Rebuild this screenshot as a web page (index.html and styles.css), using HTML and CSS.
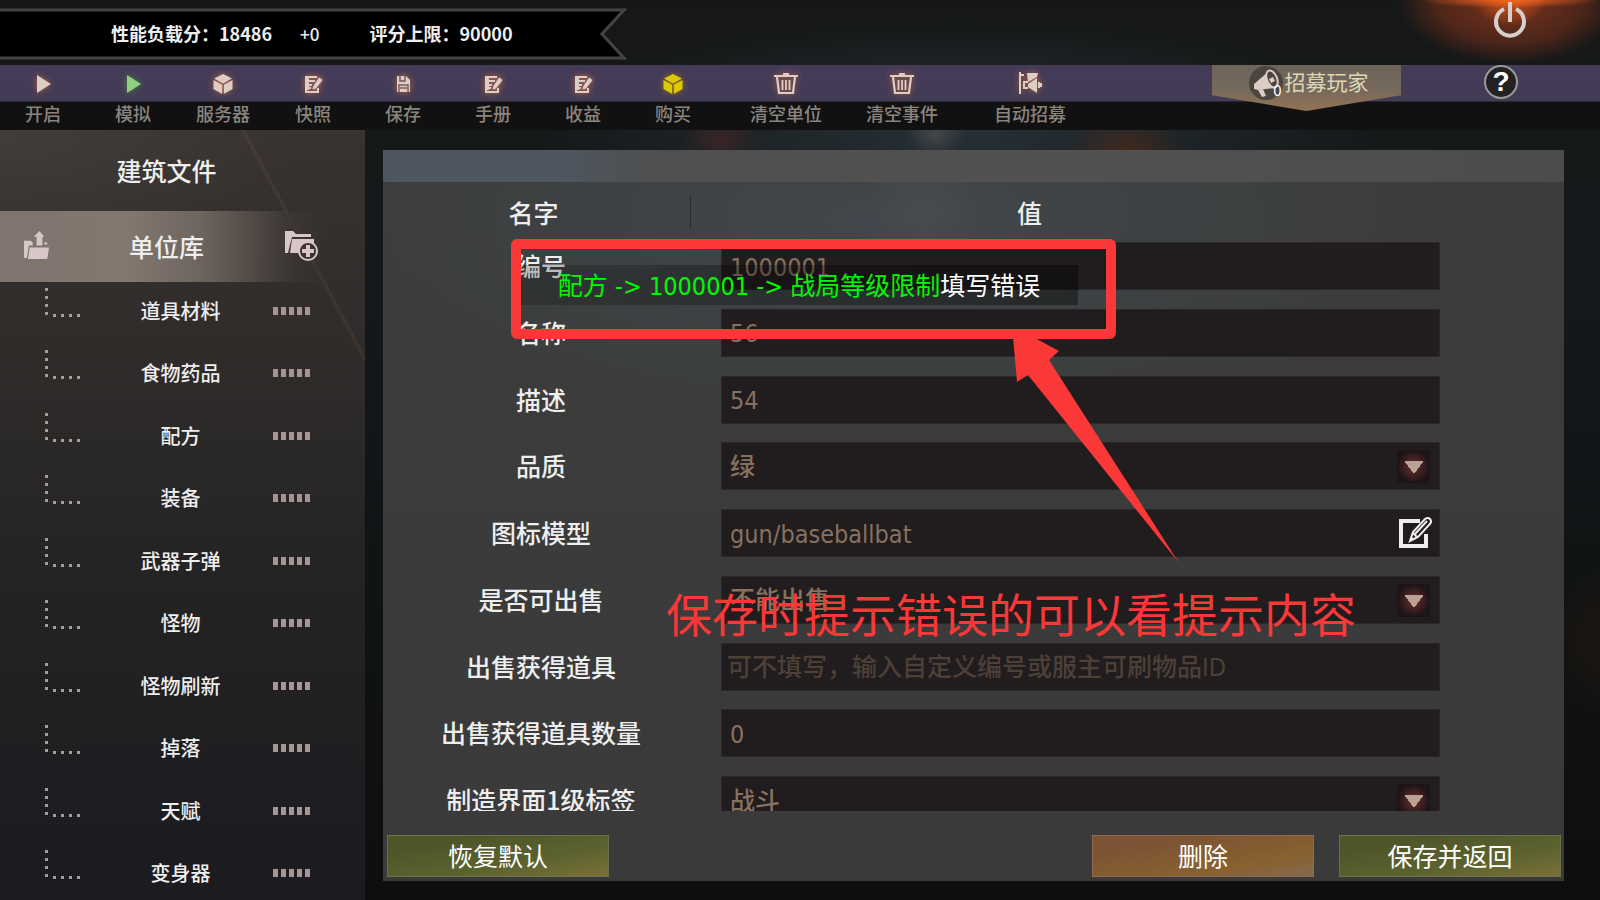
FILE: index.html
```html
<!DOCTYPE html>
<html lang="zh-CN">

<head>
    <meta charset="UTF-8">
    <meta name="viewport" content="width=device-width, initial-scale=1.0">
    <title>单位库</title>
    <link rel="stylesheet" href="styles.css">
</head>

<body>
    <!-- Shared icons -->
    <svg class="sprite" aria-hidden="true">
        <symbol id="i-play" viewBox="0 0 24 24"><path d="M6 3l14 9-14 9z" fill="currentColor"/></symbol>
        <symbol id="i-cube" viewBox="0 0 24 24"><path d="M12 2l9 4.500-9 5-9-5zM2.500 8l8.700 4.800V22l-8.700-5zM21.500 8l-8.700 4.800V22l8.700-5z" fill="currentColor"/></symbol>
        <symbol id="i-note" viewBox="0 0 24 24">
            <path d="M5 4h12v16H5z" fill="#8a5450"/>
            <path d="M16 5H5v2h2v2H5v2h2v2H5v2h2v2H5v3h12v-4" fill="none" stroke="currentColor" stroke-width="2"/>
            <path d="M8 9h6M8 13h3M8 16h2" stroke="currentColor" stroke-width="2"/>
            <path d="M18 5l4 3-7 9-4 1 1-4z" fill="currentColor" stroke="#6c4a52" stroke-width="0.600"/>
        </symbol>
        <symbol id="i-save" viewBox="0 0 24 24">
            <path d="M6 4h9l4 4v12H6z" fill="currentColor"/>
            <path d="M9 4v5h5V4M8 20v-7h9v7M9 16h7" fill="none" stroke="#7b5a5c" stroke-width="1.500"/>
        </symbol>
        <symbol id="i-trash" viewBox="0 0 24 24">
            <path d="M0 4h24M9 2h6M3 5l2 16h14l2-16" fill="none" stroke="currentColor" stroke-width="2.200"/>
            <path d="M8.500 8v10M12 8v10M15.500 8v10" stroke="currentColor" stroke-width="1.800"/>
        </symbol>
        <symbol id="i-horn" viewBox="0 0 24 24">
            <path d="M1 0h2v22H1zM3 2h3v2H3zM9 1h11l-1 4-9 5zM5 9h5v2H7v4h3v2H5zM10 12l9-6v15l-9-6zM20 10h2v6h-2zM22 11h2v4h-2z" fill="currentColor"/>
        </symbol>
    </svg>

    <header>
        <div class="score">
            <svg class="score-bg" viewBox="0 0 628 52" preserveAspectRatio="none">
                <path d="M-4 2H624L602 26l22 24H-4z" fill="#000" stroke="#444" stroke-width="3"/>
            </svg>
            <span class="score-now">性能负载分：18486</span>
            <span class="score-add">+0</span>
            <span>评分上限：90000</span>
        </div>
        <button class="power" aria-label="退出">
            <svg viewBox="0 0 36 40"><path d="M12 9a14 14 0 1 0 12 0" fill="none" stroke="currentColor" stroke-width="4"/><path d="M18 2v20" stroke="currentColor" stroke-width="4"/></svg>
        </button>
    </header>

    <nav class="toolbar">
        <button class="tool"><svg><use href="#i-play"/></svg>开启</button>
        <button class="tool green"><svg><use href="#i-play"/></svg>模拟</button>
        <button class="tool"><svg><use href="#i-cube"/></svg>服务器</button>
        <button class="tool"><svg><use href="#i-note"/></svg>快照</button>
        <button class="tool"><svg><use href="#i-save"/></svg>保存</button>
        <button class="tool"><svg><use href="#i-note"/></svg>手册</button>
        <button class="tool"><svg><use href="#i-note"/></svg>收益</button>
        <button class="tool yellow"><svg><use href="#i-cube"/></svg>购买</button>
        <button class="tool wide first"><svg><use href="#i-trash"/></svg>清空单位</button>
        <button class="tool wide"><svg><use href="#i-trash"/></svg>清空事件</button>
        <button class="tool wide last"><svg><use href="#i-horn"/></svg>自动招募</button>
        <button class="recruit">
            <span class="recruit-icon">
                <svg viewBox="0 0 34 34">
                    <circle cx="17" cy="17" r="17" fill="#4c443e"/>
                    <path d="M5 18l14-12 7 16-17 2-4-1z" fill="#dccdc5"/>
                    <ellipse cx="23" cy="13" rx="5" ry="9" transform="rotate(-22 23 13)" fill="#4c443e" stroke="#dccdc5" stroke-width="2"/>
                    <path d="M20 13l4-2 2 4-4 2z" fill="#dccdc5"/>
                    <path d="M9 24l5-1 3 7-4 1z" fill="#dccdc5"/>
                </svg>
                <span class="count">0</span>
            </span>
            招募玩家
        </button>
        <button class="help" aria-label="帮助">?</button>
    </nav>

    <main>
        <aside>
            <h2>建筑文件</h2>
            <div class="group">
                <button aria-label="导出">
                    <svg viewBox="0 0 26 30"><path d="M0 10h7l2 2v3H5L3 28H0zM6 17h20l-2 12H4zM13 15V6h-3l6-6 5 6h-2v9zM21 12h3v2h-3z" fill="currentColor"/></svg>
                </button>
                <span>单位库</span>
                <button aria-label="新建">
                    <svg viewBox="0 0 34 32">
                        <path d="M0 1h8l3 3h15v3H7L3 23H0zM7 9h22v6L17 23H5z" fill="currentColor"/>
                        <circle cx="23" cy="21" r="9" fill="#3a3431" stroke="currentColor" stroke-width="2"/>
                        <path d="M23 15v12M17 21h12" stroke="currentColor" stroke-width="4"/>
                    </svg>
                </button>
            </div>
            <ul class="tree">
                <li><i class="branch"></i><a href="#">道具材料</a><i class="dots"></i></li>
                <li><i class="branch"></i><a href="#">食物药品</a><i class="dots"></i></li>
                <li><i class="branch"></i><a href="#">配方</a><i class="dots"></i></li>
                <li><i class="branch"></i><a href="#">装备</a><i class="dots"></i></li>
                <li><i class="branch"></i><a href="#">武器子弹</a><i class="dots"></i></li>
                <li><i class="branch"></i><a href="#">怪物</a><i class="dots"></i></li>
                <li><i class="branch"></i><a href="#">怪物刷新</a><i class="dots"></i></li>
                <li><i class="branch"></i><a href="#">掉落</a><i class="dots"></i></li>
                <li><i class="branch"></i><a href="#">天赋</a><i class="dots"></i></li>
                <li><i class="branch"></i><a href="#">变身器</a><i class="dots"></i></li>
            </ul>
        </aside>

        <section class="panel">
            <div class="panel-bar"></div>
            <div class="cols">
                <span class="col-name">名字</span>
                <span class="col-value">值</span>
            </div>
            <div class="scroll">
                <form class="fields" id="unit">
                    <div class="field"><label for="f1">编号</label><input id="f1" type="text" value="1000001"></div>
                    <div class="field"><label for="f2">名称</label><input id="f2" type="text" value="56"></div>
                    <div class="field"><label for="f3">描述</label><input id="f3" type="text" value="54"></div>
                    <div class="field drop"><label for="f4">品质</label><select id="f4"><option>绿</option></select></div>
                    <div class="field">
                        <label for="f5">图标模型</label><input id="f5" type="text" value="gun/baseballbat">
                        <button class="edit" type="button" aria-label="编辑">
                            <svg viewBox="0 0 34 34">
                                <path d="M22 5H3v25h25V18" fill="none" stroke="#eee" stroke-width="4"/>
                                <path d="M12 25l3-9L27 3q3-2 5 0t0 5L20 21z" fill="#211c1d" stroke="#eee" stroke-width="2"/>
                                <path d="M17 18L29 5M15 17l4 4M12 25l3-3" stroke="#eee" stroke-width="2"/>
                            </svg>
                        </button>
                    </div>
                    <div class="field drop"><label for="f6">是否可出售</label><select id="f6"><option>不能出售</option></select></div>
                    <div class="field"><label for="f7">出售获得道具</label><input id="f7" class="hint" type="text" placeholder="可不填写，输入自定义编号或服主可刷物品ID"></div>
                    <div class="field"><label for="f8">出售获得道具数量</label><input id="f8" type="text" value="0"></div>
                    <div class="field drop"><label for="f9">制造界面1级标签</label><select id="f9"><option>战斗</option></select></div>
                </form>
            </div>
            <div class="actions">
                <button class="btn">恢复默认</button>
                <button class="btn orange">删除</button>
                <button class="btn">保存并返回</button>
            </div>

            <!-- Error message and the notes drawn over the form -->
            <div class="toast"><em>配方 -&gt; 1000001 -&gt; 战局等级限制</em>填写错误</div>
            <div class="mark"></div>
            <svg class="arrow" viewBox="0 0 166 226"><path d="M0 0h20l26 14-10 9 130 203L15 38 4 45z" fill="#fb3838"/></svg>
            <p class="note">保存时提示错误的可以看提示内容</p>
        </section>
    </main>
</body>

</html>
```

FILE: styles.css
```css
* {
    box-sizing: border-box;
}

body {
    margin: 0;
    height: 100vh;
    overflow: hidden;
    display: flex;
    flex-direction: column;
    font-family: "Noto Sans CJK SC", "Noto Sans", sans-serif;
    color: #eee;
    background:
        radial-gradient(ellipse 40px 30px at 720px 138px, #3a2426, transparent),
        radial-gradient(ellipse 30px 24px at 935px 134px, #44464a, transparent),
        radial-gradient(ellipse 60px 40px at 1125px 150px, #40291f, transparent),
        radial-gradient(ellipse 420px 110px at 960px 130px, #263036, transparent),
        radial-gradient(ellipse 50px 80px at 1600px 640px, #1d1611, transparent),
        linear-gradient(#161817, #15191b 30%, #101415 60%, #0e0e0d);
}

button,
input,
select {
    font: inherit;
    color: inherit;
    border: none;
    border-radius: 0;
    background: none;
    padding: 0;
    margin: 0;
}

button {
    cursor: pointer;
}

.sprite {
    position: absolute;
    width: 0;
    height: 0;
}

/* Header */
header {
    height: 65px;
    display: flex;
    justify-content: space-between;
    background:
        radial-gradient(ellipse 90px 8px at calc(100% - 90px) 0, #f0641f, transparent),
        radial-gradient(ellipse 36px 26px at calc(100% - 90px) 0, #d8551c, transparent),
        radial-gradient(ellipse 112px 64px at calc(100% - 90px) 0, #6e2f1b 20%, #4e261a 65%, transparent);
}

.score {
    position: relative;
    width: 628px;
    height: 52px;
    margin-top: 8px;
    padding: 0 0 2px 111px;
    display: flex;
    align-items: center;
    font-size: 18px;
    font-weight: 700;
    white-space: nowrap;
}

.score-bg {
    position: absolute;
    left: 0;
    top: 0;
    width: 100%;
    height: 100%;
    z-index: -1;
}

.score-add {
    margin: 0 50px 0 28px;
    font-size: 17px;
    font-weight: 500;
}

.power {
    width: 36px;
    height: 40px;
    margin-right: 72px;
    color: #d6cfcd;
}

/* Toolbar */
.toolbar {
    height: 65px;
    display: flex;
    align-items: flex-start;
    background: linear-gradient(#443b59 0, #433c55 36px, #111 37px);
}

.tool {
    width: 90px;
    height: 65px;
    display: flex;
    flex-direction: column;
    align-items: center;
    gap: 4px;
    padding-top: 7px;
    font-size: 18px;
    font-weight: 500;
    line-height: 26px;
    color: #8b847d;
}

.tool:first-child {
    margin-left: -2px;
}

.tool svg {
    width: 24px;
    height: 24px;
    color: #dccdc5;
    filter: drop-shadow(0 0 3px #b4603c);
}

.tool.green svg {
    color: #8fd081;
    filter: drop-shadow(0 0 3px #4b8a3a);
}

.tool.yellow svg {
    color: #dccb00;
    filter: drop-shadow(0 0 3px #a06a20);
}

.tool.wide {
    width: 116px;
}

.tool.first {
    margin-left: 10px;
}

.tool.last {
    margin-left: 12px;
}

.recruit {
    width: 189px;
    height: 46px;
    margin-left: auto;
    padding: 0 0 14px 4px;
    display: flex;
    align-items: center;
    justify-content: center;
    gap: 2px;
    font-size: 21px;
    line-height: 26px;
    color: #ddd9b5;
    background: linear-gradient(#6f645b, #75685d 50%, #947354);
    clip-path: polygon(0 0, 100% 0, 100% 66%, 50% 100%, 0 66%);
}

.recruit-icon {
    position: relative;
    width: 34px;
    height: 34px;
    margin-top: 4px;
}

.recruit-icon svg {
    display: block;
    width: 34px;
    height: 34px;
}

.count {
    position: absolute;
    right: 1px;
    bottom: 0;
    font-size: 15px;
    line-height: 20px;
    color: #fff;
}

.help {
    width: 34px;
    height: 34px;
    margin: 0 82px 0 83px;
    border: 2px solid #999;
    border-radius: 50%;
    background: #222;
    color: #fff;
    font-family: "Liberation Sans", sans-serif;
    font-size: 28px;
    font-weight: 700;
    line-height: 30px;
}

/* Sidebar */
main {
    flex: 1;
    min-height: 0;
    display: flex;
}

aside {
    width: 365px;
    overflow: hidden;
    background:
        radial-gradient(ellipse 300px 130px at 0 0, rgba(90, 85, 75, 0.3), transparent),
        linear-gradient(62deg, transparent 84%, rgba(110, 85, 65, 0.2) 84% 84.500%, transparent 84.500%),
        linear-gradient(#383331, #2d2a29 35%, #232324 60%, #1b1b20);
}

h2 {
    height: 81px;
    margin: 0;
    padding-right: 32px;
    text-align: center;
    font-size: 25px;
    font-weight: 500;
    line-height: 81px;
}

.group {
    height: 71px;
    padding: 0 46px 2px 24px;
    display: flex;
    align-items: center;
    font-size: 25px;
    font-weight: 500;
    line-height: 36px;
    background: linear-gradient(90deg, #7f746e, #83786f 35%, #6d645e 55%, rgba(60, 54, 51, 0.8) 80%, transparent 90%);
}

.group span {
    flex: 1;
    padding-right: 10px;
    text-align: center;
}

.group button {
    width: 34px;
    color: #d8c6c8;
}

.group svg {
    display: block;
    height: 32px;
}

.group button:first-child svg {
    height: 29px;
}

.tree {
    height: 625px;
    margin: 0;
    padding: 0;
    list-style: none;
    display: grid;
    grid-template-rows: repeat(10, 1fr);
    font-size: 20px;
    font-weight: 500;
}

.tree li {
    display: flex;
    align-items: center;
    padding: 0 53px 5px 45px;
}

.tree a {
    flex: 1;
    padding-left: 4px;
    text-align: center;
    line-height: 30px;
    color: inherit;
    text-decoration: none;
}

.branch {
    width: 39px;
    height: 34px;
    margin-bottom: 22px;
    background:
        repeating-linear-gradient(transparent 0 5px, #aa9c9a 5px 8px) 0 0 / 3px 32px no-repeat,
        repeating-linear-gradient(90deg, transparent 0 5px, #aa9c9a 5px 8px) 3px 100% / 34px 3px no-repeat;
}

.dots {
    width: 39px;
    height: 8px;
    background: repeating-linear-gradient(90deg, #a89492 0 5px, transparent 5px 8px);
}

/* Form panel */
.panel {
    position: relative;
    flex: 1;
    margin: 20px 36px 19px 18px;
    display: flex;
    flex-direction: column;
    background:
        radial-gradient(ellipse 60px 60px at 46% 60px, rgba(90, 85, 85, 0.35), transparent),
        radial-gradient(ellipse 560px 220px at 42% 70px, rgba(66, 74, 80, 0.8), transparent),
        linear-gradient(#3c3c3b, #3a3b3a 50%, #3a3a3a);
}

.panel-bar {
    height: 32px;
    background: linear-gradient(90deg, #4e565f 15%, #4f4f4f 23%, #535150 60%, #4d4c4b);
}

.cols {
    height: 60px;
    display: flex;
    align-items: center;
    font-size: 25px;
    font-weight: 500;
}

.col-name {
    width: 308px;
    height: 34px;
    padding-right: 6px;
    line-height: 34px;
    text-align: center;
    border-right: 1px solid #2b2e30;
}

.col-value {
    flex: 1;
    padding-right: 196px;
    line-height: 34px;
    text-align: center;
}

.scroll {
    flex: 1;
    min-height: 0;
    overflow: hidden;
}

.fields {
    height: 582px;
    display: grid;
    grid-template-rows: repeat(9, 48px);
    align-content: space-between;
    padding-right: 124px;
    font-size: 25px;
}

.field {
    position: relative;
    display: flex;
}

.field label {
    width: 316px;
    margin-right: 22px;
    line-height: 46px;
    text-align: center;
    font-weight: 500;
}

.field input,
.field select {
    flex: 1;
    min-width: 0;
    height: 48px;
    padding: 2px 8px 0;
    appearance: none;
    font-family: "DejaVu Sans Condensed", "Noto Sans CJK SC", sans-serif;
    font-weight: 500;
    color: #87715f;
    background: #211c1d;
    border: 1px solid #2a2829;
}

.field .hint {
    padding-left: 5px;
}

.field input::placeholder {
    color: #4c4038;
    opacity: 1;
}

.drop::after {
    content: "";
    position: absolute;
    right: 10px;
    top: 8px;
    width: 33px;
    height: 33px;
    background:
        conic-gradient(from -37deg at 50% 100%, #b8a294 0 74deg, transparent 0) 50% 11px / 20px 13px no-repeat,
        radial-gradient(circle, #6d2f2f, #1c1416 70%);
    pointer-events: none;
}

.edit {
    position: absolute;
    right: 8px;
    top: 7px;
    width: 34px;
    height: 34px;
}

.edit svg {
    display: block;
}

.actions {
    height: 70px;
    padding: 24px 3px 4px 4px;
    display: flex;
    gap: 25px;
}

.btn {
    width: 222px;
    height: 42px;
    padding-bottom: 2px;
    font-size: 25px;
    line-height: 38px;
    color: #fff;
    border: 1px solid #6b7148;
    background: linear-gradient(170deg, #4e5529 20%, #5d632f 65%, #7b7038);
}

.btn:first-child {
    margin-right: auto;
}

.btn.orange {
    border-color: #94694e;
    background: linear-gradient(170deg, #7c5334 20%, #89602f 70%, #84694f);
}

/* Overlays */
.toast {
    position: absolute;
    left: 137px;
    top: 115px;
    width: 558px;
    height: 40px;
    padding-top: 2px;
    font-family: "DejaVu Sans Condensed", "Noto Sans CJK SC", sans-serif;
    font-size: 25px;
    line-height: 40px;
    text-align: center;
    white-space: nowrap;
    color: #fff;
    background: linear-gradient(90deg, rgba(0, 0, 0, 0.2), rgba(0, 0, 0, 0.4));
}

.toast em {
    font-style: normal;
    color: #00f800;
}

.mark {
    position: absolute;
    left: 128px;
    top: 89px;
    width: 605px;
    height: 100px;
    border: 10px solid #fb3838;
    border-radius: 6px;
}

.arrow {
    position: absolute;
    left: 630px;
    top: 187px;
    width: 166px;
    height: 226px;
}

.note {
    position: absolute;
    left: 283px;
    top: 432px;
    margin: 0;
    font-size: 46px;
    font-weight: 400;
    line-height: 60px;
    white-space: nowrap;
    color: #fb3838;
}
```
